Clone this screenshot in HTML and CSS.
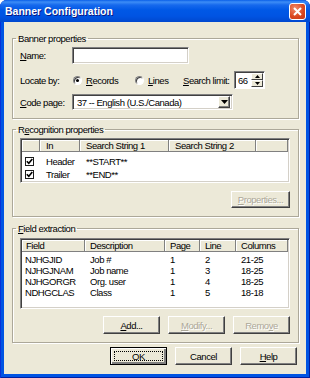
FILE: index.html
```html
<!DOCTYPE html>
<html lang="en">
<head>
    <meta charset="UTF-8">
    <title>Banner Configuration</title>
    <link rel="stylesheet" href="styles.css">
</head>
<body>

<div class="window">
    <div class="titlebar">
        <span class="title">Banner Configuration</span>
        <span class="close">
            <svg width="9" height="9" viewBox="0 0 9 9"><path d="M1 1 L8 8 M8 1 L1 8" stroke="#fff" stroke-width="2" fill="none"/></svg>
        </span>
    </div>

    <div class="client">
        <fieldset class="group">
            <legend>Banner properties</legend>
            <div class="row r-name">
                <span class="lbl"><u>N</u>ame:</span>
                <div class="edit name-edit"></div>
            </div>
            <div class="row r-locate">
                <span class="lbl">Locate by:</span>
                <span class="radio on"></span>
                <span class="rtext records"><u>R</u>ecords</span>
                <span class="radio"></span>
                <span class="rtext lines"><u>L</u>ines</span>
                <span class="limit-lbl"><u>S</u>earch limit:</span>
                <div class="spin">
                    <div class="edit spin-val">66</div>
                    <div class="spin-btns">
                        <span class="sbtn"><svg width="5" height="3" viewBox="0 0 5 3"><path d="M2.5 0 L5 3 L0 3 Z" fill="#000"/></svg></span>
                        <span class="sbtn"><svg width="5" height="3" viewBox="0 0 5 3"><path d="M0 0 L5 0 L2.5 3 Z" fill="#000"/></svg></span>
                    </div>
                </div>
            </div>
            <div class="row r-code">
                <span class="lbl"><u>C</u>ode page:</span>
                <div class="edit combo">
                    <span class="combo-val">37 -- English (U.S./Canada)</span>
                    <span class="drop"><svg width="7" height="4" viewBox="0 0 7 4"><path d="M0 0 L7 0 L3.5 4 Z" fill="#000"/></svg></span>
                </div>
            </div>
        </fieldset>

        <fieldset class="group g-recog">
            <legend>R<u>e</u>cognition properties</legend>
            <div class="list recog-list">
                <div class="lv-head recog-cols">
                    <span></span>
                    <span>In</span>
                    <span>Search String 1</span>
                    <span>Search String 2</span>
                    <span></span>
                </div>
                <div class="lv-body recog-body">
                    <div class="recog-cols lv-row">
                        <span class="chk-cell"><span class="chk"><svg width="7" height="7" viewBox="0 0 7 7"><path d="M0.8 3.2 L2.8 5.3 L6.3 1" stroke="#000" stroke-width="1.6" fill="none"/></svg></span></span>
                        <span>Header</span>
                        <span>**START**</span>
                        <span></span>
                        <span></span>
                    </div>
                    <div class="recog-cols lv-row">
                        <span class="chk-cell"><span class="chk"><svg width="7" height="7" viewBox="0 0 7 7"><path d="M0.8 3.2 L2.8 5.3 L6.3 1" stroke="#000" stroke-width="1.6" fill="none"/></svg></span></span>
                        <span>Trailer</span>
                        <span>**END**</span>
                        <span></span>
                        <span></span>
                    </div>
                </div>
            </div>
            <div class="btn-row">
                <button class="btn disabled"><u>P</u>roperties...</button>
            </div>
        </fieldset>

        <fieldset class="group g-field">
            <legend><u>F</u>ield extraction</legend>
            <div class="list field-list">
                <div class="lv-head field-cols">
                    <span>Field</span>
                    <span>Description</span>
                    <span>Page</span>
                    <span>Line</span>
                    <span>Columns</span>
                </div>
                <div class="lv-body field-body">
                    <div class="field-cols lv-row"><span>NJHGJID</span><span>Job #</span><span>1</span><span>2</span><span>21-25</span></div>
                    <div class="field-cols lv-row"><span>NJHGJNAM</span><span>Job name</span><span>1</span><span>3</span><span>18-25</span></div>
                    <div class="field-cols lv-row"><span>NJHGORGR</span><span>Org. user</span><span>1</span><span>4</span><span>18-25</span></div>
                    <div class="field-cols lv-row"><span>NDHGCLAS</span><span>Class</span><span>1</span><span>5</span><span>18-18</span></div>
                </div>
            </div>
            <div class="btn-row">
                <button class="btn"><u>A</u>dd...</button>
                <button class="btn disabled"><u>M</u>odify...</button>
                <button class="btn disabled">Remo<u>v</u>e</button>
            </div>
        </fieldset>

        <div class="dialog-btns">
            <button class="btn default"><span class="focus">OK</span></button>
            <button class="btn">Cancel</button>
            <button class="btn"><u>H</u>elp</button>
        </div>
    </div>
</div>

</body>
</html>
```

FILE: styles.css
```css
* {
    box-sizing: border-box;
}
body {
    margin: 0;
    font-family: "Liberation Sans", Arial, sans-serif;
    font-size: 9.5px;
    letter-spacing: -0.45px;
    line-height: 11px;
    color: #000;
    background: #fff;
}
u {
    text-decoration: underline;
    text-underline-offset: 1px;
}
.window {
    width: 310px;
    height: 378px;
    background: #0054e3;
    border-radius: 7px 7px 0 0;
    overflow: hidden;
    display: flex;
    flex-direction: column;
    box-shadow: inset 1px 0 #0831d9, inset -1px 0 #001ea0, inset 0 -1px #001ea0;
}
.titlebar {
    height: 22px;
    flex: none;
    display: flex;
    align-items: center;
    justify-content: space-between;
    padding: 0 4px 0 5px;
    background: linear-gradient(#0a5fe8 0, #3d8df6 2px, #1669ed 5px, #0058e6 10px, #0054e3 16px, #0048cf 22px);
}
.title {
    color: #fff;
    font-weight: bold;
    font-size: 10.5px;
    letter-spacing: 0;
    text-shadow: 1px 1px #0a1883;
}
.close {
    width: 17px;
    height: 17px;
    border: 1px solid #fff;
    border-radius: 3px;
    background: radial-gradient(circle at 35% 30%, #f08a6a, #d9461e 60%, #c0381a);
    display: flex;
    align-items: center;
    justify-content: center;
}
.client {
    flex: 1;
    margin: 0 4px 4px;
    background: #ece9d8;
    padding: 11px 7px 0 8px;
    display: flex;
    flex-direction: column;
}

/* group boxes */
.group {
    margin: 0;
    min-width: 0;
    border: 1px solid #aca899;
    box-shadow: 1px 1px 0 #fff, inset 1px 1px 0 #fff;
    padding: 3px 8px 8px 7px;
}
.group legend {
    padding: 0 2px;
    margin-left: -4px;
    line-height: 11px;
}
.g-recog {
    margin-top: 5px;
}
.g-field {
    margin-top: 6px;
    padding-top: 4px;
}

/* banner rows */
.row {
    display: flex;
    align-items: center;
    white-space: nowrap;
}
.r-name {
    height: 17px;
}
.r-locate {
    height: 18px;
    margin-top: 7px;
}
.r-code {
    height: 16px;
    margin-top: 5px;
}
.lbl {
    width: 52px;
    flex: none;
}
.edit {
    background: #fff;
    border: 1px solid;
    border-color: #808080 #fff #fff #808080;
    box-shadow: inset 1px 1px #404040, inset -1px -1px #d4d0c8;
}
.name-edit {
    width: 117px;
    height: 17px;
}
.radio {
    width: 9px;
    height: 9px;
    flex: none;
    border-radius: 50%;
    background: #fff;
    border: 1px solid;
    border-color: #808080 #fff #fff #808080;
    box-shadow: inset 1px 1px #404040;
    display: flex;
    align-items: center;
    justify-content: center;
    margin-left: 1px;
}
.radio.on::after {
    content: "";
    width: 3px;
    height: 3px;
    border-radius: 50%;
    background: #000;
}
.rtext {
    margin-left: 4px;
    flex: none;
}
.records {
    width: 48px;
}
.lines {
    width: 35px;
}
.limit-lbl {
    width: 51px;
    flex: none;
}
.spin {
    display: flex;
    width: 31px;
    height: 18px;
}
.spin-val {
    flex: 1;
    padding: 3px 0 0 3px;
    border-right: none;
    box-shadow: inset 1px 1px #404040;
}
.spin-btns {
    width: 14px;
    display: flex;
    flex-direction: column;
    border: 1px solid;
    border-color: #808080 #fff #fff #808080;
    border-left: none;
    background: #fff;
    padding: 1px 1px 1px 0;
    box-shadow: inset 0 1px #404040;
}
.sbtn {
    flex: 1;
    display: flex;
    align-items: center;
    justify-content: center;
    background: #ece9d8;
    border: 1px solid;
    border-color: #fff #404040 #404040 #fff;
}
.combo {
    width: 161px;
    height: 16px;
    display: flex;
    align-items: center;
    justify-content: space-between;
    padding: 2px;
}
.combo-val {
    padding-left: 2px;
}
.drop {
    width: 12px;
    height: 12px;
    background: #ece9d8;
    border: 1px solid;
    border-color: #fff #404040 #404040 #fff;
    box-shadow: inset -1px -1px #808080;
    display: flex;
    align-items: center;
    justify-content: center;
}

/* list views */
.list {
    background: #fff;
    border: 1px solid;
    border-color: #808080 #fff #fff #808080;
    box-shadow: inset 1px 1px #404040, inset -1px -1px #d4d0c8;
    padding: 1px;
    overflow: hidden;
}
.recog-list {
    height: 45px;
}
.field-list {
    height: 71px;
}
.recog-cols {
    display: grid;
    grid-template-columns: 18px 40px 89px 87px 1fr;
}
.field-cols {
    display: grid;
    grid-template-columns: 63px 80px 35px 36px 1fr;
}
.lv-head {
    height: 12px;
    background: #ece9d8;
}
.lv-head span {
    padding-left: 5px;
    line-height: 12px;
    box-shadow: inset -1px -1px #808080, inset 1px 1px #fff;
    white-space: nowrap;
}
.recog-cols.lv-head span {
    padding-left: 6px;
}
.field-cols.lv-head span:first-child {
    padding-left: 4px;
}
.recog-body {
    padding-top: 3px;
}
.recog-body .lv-row {
    height: 13px;
    align-items: center;
}
.recog-body .lv-row > span {
    padding-left: 6px;
}
.recog-body .lv-row > .chk-cell {
    padding-left: 3px;
    display: flex;
}
.chk {
    width: 9px;
    height: 9px;
    border: 1px solid #1c1c1c;
    background: #fff;
    display: flex;
    align-items: center;
    justify-content: center;
}
.field-body {
    padding-top: 2px;
}
.field-body .lv-row {
    height: 11px;
}
.field-body .lv-row span {
    padding-left: 5px;
}
.field-body .lv-row span:first-child {
    padding-left: 3px;
}

/* buttons */
.btn-row {
    display: flex;
    justify-content: flex-end;
    gap: 8px;
    margin-top: 7px;
}
.g-recog .btn-row {
    margin-top: 8px;
}
.btn {
    width: 57px;
    height: 18px;
    padding: 0;
    font-family: inherit;
    font-size: inherit;
    letter-spacing: inherit;
    color: #000;
    background: #ece9d8;
    border: 1px solid;
    border-color: #fff #404040 #404040 #fff;
    box-shadow: inset -1px -1px #808080;
    display: flex;
    align-items: center;
    justify-content: center;
}
.g-recog .btn {
    width: 59px;
    height: 17px;
}
.btn.disabled {
    color: #aca899;
    text-shadow: 1px 1px #fff;
}
.btn.default {
    border: 1px solid #000;
    box-shadow: inset 1px 1px #fff, inset -2px -2px #808080;
    padding: 3px;
}
.focus {
    flex: 1;
    align-self: stretch;
    border: 1px dotted #000;
    display: flex;
    align-items: center;
    justify-content: center;
}
.dialog-btns {
    display: flex;
    justify-content: flex-end;
    gap: 8px;
    margin-top: 4px;
    padding-right: 2px;
}
```
